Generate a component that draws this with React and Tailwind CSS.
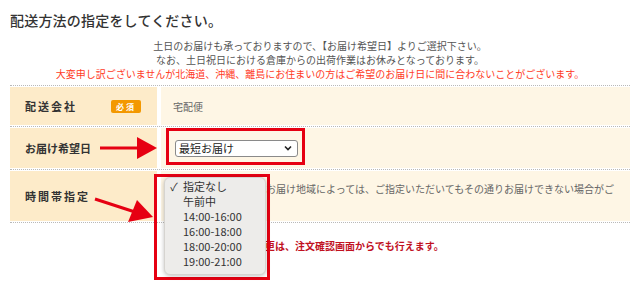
import React from 'react';

const Sep = () => <div className="h-0 border-t border-dotted border-[#b9b9b9] my-px" />;

const times = ['指定なし', '午前中', '14:00-16:00', '16:00-18:00', '18:00-20:00', '19:00-21:00'];

export default function App() {
  return (
    <div
      className="relative w-[640px] h-[285px] overflow-hidden bg-white text-[#333]"
      style={{ fontFamily: '"Noto Sans CJK JP", "Noto Sans", sans-serif' }}
    >
      <div className="px-[10px] pt-[10px]">
        <h1 className="text-[14px] leading-[20px] font-medium text-[#333] tracking-[0.2px]">配送方法の指定をしてください。</h1>

        <div className="mt-[9px] text-center text-[10px] leading-[14px] text-[#555]">
          <p>土日のお届けも承っておりますので、【お届け希望日】よりご選択下さい。</p>
          <p>なお、土日祝日における倉庫からの出荷作業はお休みとなっております。</p>
          <p className="text-[#ff3b1f]">大変申し訳ございませんが北海道、沖縄、離島にお住まいの方はご希望のお届け日に間に合わないことがございます。</p>
        </div>

        <div className="mt-[4px]">
          <Sep />
          <div className="grid grid-cols-[147px_1fr] gap-x-[4px] h-[38px]">
            <div className="bg-[#fdebc9] flex items-center pl-[15px] pr-[16px] justify-between">
              <span className="text-[11px] font-bold tracking-[2px] text-[#333]">配送会社</span>
              <span className="bg-[#f39800] text-white text-[8px] font-bold rounded-[2px] px-[5px] leading-[13px] tracking-[2px]">必須</span>
            </div>
            <div className="bg-[#fef6e5] flex items-center pl-[12px] text-[10px] text-[#666]">宅配便</div>
          </div>
          <Sep />
          <div className="grid grid-cols-[147px_1fr] gap-x-[4px] h-[40px]">
            <div className="bg-[#fdebc9] flex items-center pl-[15px]">
              <span className="text-[11px] font-bold text-[#333]">お届け希望日</span>
            </div>
            <div className="bg-[#fef6e5] flex items-center pl-[14px]">
              <div className="w-[123px] h-[17px] bg-white border border-[#8a8a8a] rounded-[3px] flex items-center justify-between pl-[3px] pr-[5px]">
                <span className="text-[11px] leading-none text-[#222]">最短お届け</span>
                <svg width="8" height="6" viewBox="0 0 8 6"><path d="M1 1.5 L4 4.5 L7 1.5" fill="none" stroke="#222" strokeWidth="1.6" /></svg>
              </div>
            </div>
          </div>
          <Sep />
          <div className="grid grid-cols-[147px_1fr] gap-x-[4px] h-[50px]">
            <div className="bg-[#fdebc9] flex items-center pl-[15px]">
              <span className="text-[11px] font-bold tracking-[2px] text-[#333]">時間帯指定</span>
            </div>
            <div className="bg-[#fef6e5] flex items-start pl-[14px] pt-[11px] gap-[5px]">
              <div className="w-[86px] h-[17px] bg-white border border-[#8a8a8a] rounded-[3px] shrink-0" />
              <span className="text-[10px] leading-[14px] text-[#666] whitespace-nowrap">お届け地域によっては、ご指定いただいてもその通りお届けできない場合がご</span>
            </div>
          </div>
          <Sep />
        </div>

        <p className="mt-[16px] pl-[185px] text-[10px] leading-[14px] font-bold text-[#c1121f]">※配送日時の変更は、注文確認画面からでも行えます。</p>
      </div>

      {/* annotation: red boxes */}
      <div className="absolute left-[166px] top-[128px] w-[139px] h-[37px] border-[3px] border-[#e60012]" />
      <div className="absolute left-[154px] top-[174px] w-[116px] h-[106px] border-[3px] border-[#e60012]" />

      {/* dropdown popup */}
      <div className="absolute left-[164px] top-[177px] w-[102px] h-[98px] bg-[#edecea] rounded-[6px] shadow-[0_1px_4px_rgba(0,0,0,0.25)] border border-[#d6d4d0] pt-[1px]">
        {times.map((t, i) => (
          <div key={t} className="flex items-center h-[15px] text-[11px] text-[#333]">
            <span className="w-[18px] text-center text-[11px]">{i === 0 ? '✓' : ''}</span>
            <span>{t}</span>
          </div>
        ))}
      </div>

      {/* arrows */}
      <svg className="absolute left-0 top-0 pointer-events-none" width="640" height="285">
        <line x1="100" y1="148" x2="140" y2="148" stroke="#e60012" strokeWidth="3" />
        <polygon points="137,137 157,148 137,159" fill="#e60012" />
        <line x1="95" y1="199" x2="135" y2="212" stroke="#e60012" strokeWidth="3" />
        <polygon points="137,200 153,217 128,222" fill="#e60012" />
      </svg>
    </div>
  );
}
